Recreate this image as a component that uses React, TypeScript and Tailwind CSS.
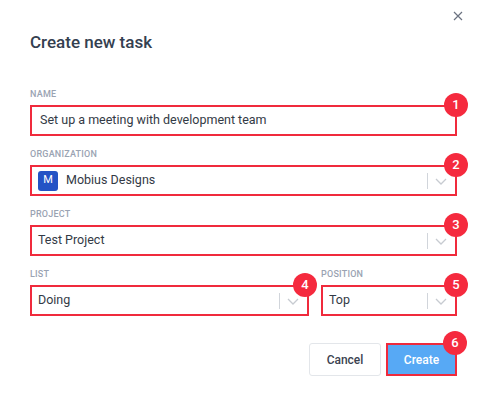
import React from "react";

const Badge = ({ n, cls }: { n: string; cls: string }) => (
  <div className={`absolute ${cls} w-[24px] h-[24px] rounded-full bg-[#f52a3e] text-white text-[13px] font-medium flex items-center justify-center`}>{n}</div>
);

const Chevron = () => (
  <div className="flex items-center h-full">
    <div className="w-px h-[16px] bg-[#d1d5db]" />
    <svg width="26" height="16" viewBox="0 0 26 16"><path d="M8 6l5 5 5-5" fill="none" stroke="#c7cbd1" strokeWidth="1.3" /></svg>
  </div>
);

const Label = ({ t }: { t: string }) => (
  <div className="text-[9px] font-medium text-[#9aa3b2] tracking-wide leading-none mb-[6px]">{t}</div>
);

const Select = ({ children, badge, bcls }: { children: React.ReactNode; badge: string; bcls: string }) => (
  <div className="relative h-[31px] border-2 border-[#f02a3c] flex items-center justify-between pl-[6px] pr-[1px]">
    <div className="flex items-center text-[12.5px] text-[#333a45]">{children}</div>
    <Chevron />
    <Badge n={badge} cls={bcls} />
  </div>
);

export default function App() {
  return (
    <div className="w-[487px] h-[400px] bg-white relative" style={{ fontFamily: "Roboto, 'Liberation Sans', sans-serif" }}>
      <svg className="absolute right-[24px] top-[11px]" width="10" height="10" viewBox="0 0 10 10"><path d="M1 1l8 8M9 1l-8 8" stroke="#6b7280" strokeWidth="1.2" /></svg>
      <div className="px-[30px] pt-[34px]">
        <h1 className="text-[17px] text-[#344050] font-medium leading-none mb-[39px]">Create new task</h1>
        <Label t="NAME" />
        <div className="relative h-[31px] border-2 border-[#f02a3c] flex items-center pl-[8px] text-[12.5px] text-[#333a45] mb-[14px]">
          Set up a meeting with development team
          <Badge n="1" cls="right-[-13px] top-[-14px]" />
        </div>
        <Label t="ORGANIZATION" />
        <div className="mb-[14px]">
          <Select badge="2" bcls="right-[-13px] top-[-14px]">
            <span className="w-[20px] h-[20px] rounded-[3px] bg-[#2453c5] text-white text-[11px] flex items-center justify-center mr-[8px]">M</span>
            Mobius Designs
          </Select>
        </div>
        <Label t="PROJECT" />
        <div className="mb-[14px]">
          <Select badge="3" bcls="right-[-13px] top-[-14px]">Test Project</Select>
        </div>
        <div className="flex gap-[12px]">
          <div className="w-[279px]">
            <Label t="LIST" />
            <Select badge="4" bcls="right-[-10px] top-[-14px]">Doing</Select>
          </div>
          <div className="flex-1">
            <Label t="POSITION" />
            <Select badge="5" bcls="right-[-13px] top-[-14px]">Top</Select>
          </div>
        </div>
        <div className="flex justify-end gap-[5px] mt-[27px]">
          <button className="w-[72px] h-[33px] border border-[#e3e6ea] rounded-[3px] text-[12px] font-medium text-[#3c4350]">Cancel</button>
          <div className="relative">
            <button className="w-[71px] h-[33px] border-2 border-[#f02a3c] bg-[#57a9f5] text-[12px] font-medium text-white">Create</button>
            <Badge n="6" cls="right-[-10px] top-[-12px]" />
          </div>
        </div>
      </div>
    </div>
  );
}
